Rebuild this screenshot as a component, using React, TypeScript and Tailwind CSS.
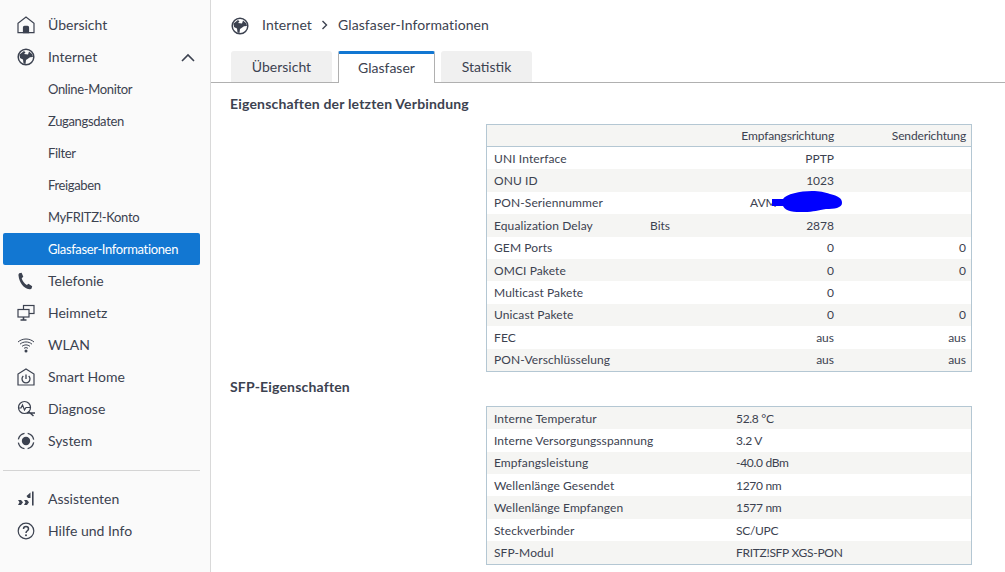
import type { ReactNode } from 'react'

const ink = '#3c4250'

function HomeIcon() {
  return (
    <svg width="18" height="18" viewBox="0 0 18 18" fill="none" stroke={ink} strokeWidth="1.2">
      <path d="M1 16.6V7.2L9 1l8 6.2v9.4z" />
      <path d="M6.5 16.6v-5.2c0-.6.4-1 1-1h3c.6 0 1 .4 1 1v5.2z" fill={ink} />
    </svg>
  )
}

function GlobeIcon() {
  return (
    <svg width="18" height="18" viewBox="0 0 18 18" fill="none">
      <circle cx="9" cy="9" r="7.8" stroke={ink} strokeWidth="1.5" />
      <path d="M2.500 6.500 7 3l1.500 1.500L7 6l4 .5 1-3 3 2.500 1 3-3 .3-2.500 1.700-1.500 1-.5 4-2-.5-.5-4-3-1.500z" fill={ink} />
    </svg>
  )
}

function PhoneIcon() {
  return (
    <svg width="18" height="18" viewBox="0 0 18 18" fill={ink}>
      <path d="M2.200 1.200 4.600.8l1.700 4-1.600 1.400c.7 2.600 2.600 5.200 5.100 6.700l1.700-1.200 3.700 2.500-.6 2.200c-.3.500-1.400 1-2.200.8C6.600 16.500 2.300 10.600 1.500 3.400c-.1-.9.200-1.800.7-2.200z" />
    </svg>
  )
}

function NetworkIcon() {
  return (
    <svg width="18" height="18" viewBox="0 0 18 18" fill="none" stroke={ink} strokeWidth="1.2">
      <rect x="6.500" y="1.500" width="10.500" height="8" />
      <rect x="1" y="5.500" width="11" height="7.500" fill="#fafafa" />
      <path d="M6.500 13v2.500M3.500 16h6" strokeWidth="1.600" />
    </svg>
  )
}

function WifiIcon() {
  return (
    <svg width="18" height="18" viewBox="0 0 18 18" fill="none" stroke={ink} strokeWidth="1">
      <path d="M1 6c4.500-4 11.500-4 16 0M3 8.200c3.400-3 8.600-3 12 0M5 10.400c2.300-2 5.700-2 8 0M7 12.400c1.200-1 2.800-1 4 0" />
      <circle cx="9" cy="15" r="1.500" fill={ink} stroke="none" />
    </svg>
  )
}

function SmartHomeIcon() {
  return (
    <svg width="18" height="18" viewBox="0 0 18 18" fill="none" stroke={ink} strokeWidth="1.2">
      <path d="M1 17V6l8-5 8 5v11z" />
      <path d="M6.300 8a4 4 0 1 0 5.400 0M9 6.500V11" strokeWidth="1.300" />
    </svg>
  )
}

function DiagnoseIcon() {
  return (
    <svg width="18" height="18" viewBox="0 0 18 18" fill="none" stroke={ink} strokeWidth="1.2">
      <circle cx="7.500" cy="7.500" r="6" />
      <path d="M1.500 8h2.500l1.500-3 2 5 1.500-2.500h5" />
      <path d="m11.500 11.500 5 4.500M10 13h8" strokeWidth="1.500" />
    </svg>
  )
}

function SystemIcon() {
  return (
    <svg width="18" height="18" viewBox="0 0 18 18" fill="none">
      <circle cx="9" cy="9" r="7.800" stroke={ink} strokeWidth="1.300" strokeDasharray="9 3.250" strokeDashoffset="-1.500" />
      <circle cx="9" cy="9" r="4.200" fill={ink} />
    </svg>
  )
}

function WizardIcon() {
  return (
    <svg width="18" height="18" viewBox="0 0 18 18" fill={ink}>
      <path d="M1 10h3l2 2.300L4 15H1l1.500-2.700zM7 10h3l2 2.300L10 15H7l1.500-2.700zM9.500 6l4-3.500V8H11zM15 1.500h1.600V15.500H15z" />
    </svg>
  )
}

function HelpIcon() {
  return (
    <svg width="18" height="18" viewBox="0 0 18 18" fill="none" stroke={ink} strokeWidth="1.200">
      <circle cx="9" cy="9" r="7.800" />
      <path d="M6.500 7c0-3.200 5-3.200 5 0 0 1.800-2.500 1.800-2.500 4" strokeWidth="1.500" />
      <circle cx="9" cy="13.300" r="1" fill={ink} stroke="none" />
    </svg>
  )
}

function NavItem({ icon, label, trailing }: { icon: ReactNode; label: string; trailing?: ReactNode }) {
  return (
    <div className="flex h-8 items-center pl-[17px] pr-[15px] text-[14px] text-[#3c4250]">
      <span className="flex w-[31px] shrink-0">{icon}</span>
      <span className="flex-1 pb-[2px]">{label}</span>
      {trailing}
    </div>
  )
}

function SubItem({ label, active }: { label: string; active?: boolean }) {
  return (
    <div
      className={
        active
          ? 'ml-[3px] mr-[10px] flex h-8 items-center rounded-[2px] bg-[#1277d2] pl-[45px] pt-[2px] text-[13px] tracking-[-0.35px] text-white'
          : 'flex h-8 items-center pl-[48px] pt-[2px] text-[13px] tracking-[-0.35px] text-[#3c4250]'
      }
    >
      {label}
    </div>
  )
}

function Sidebar() {
  return (
    <aside className="flex w-[211px] shrink-0 flex-col border-r border-[#d9d9d9] bg-[#fafafa] pt-[9px]">
      <NavItem icon={<HomeIcon />} label="Übersicht" />
      <NavItem
        icon={<GlobeIcon />}
        label="Internet"
        trailing={
          <svg width="14" height="9" viewBox="0 0 14 9" fill="none" stroke={ink} strokeWidth="1.600">
            <path d="m1 8 6-6 6 6" />
          </svg>
        }
      />
      <SubItem label="Online-Monitor" />
      <SubItem label="Zugangsdaten" />
      <SubItem label="Filter" />
      <SubItem label="Freigaben" />
      <SubItem label="MyFRITZ!-Konto" />
      <SubItem label="Glasfaser-Informationen" active />
      <NavItem icon={<PhoneIcon />} label="Telefonie" />
      <NavItem icon={<NetworkIcon />} label="Heimnetz" />
      <NavItem icon={<WifiIcon />} label="WLAN" />
      <NavItem icon={<SmartHomeIcon />} label="Smart Home" />
      <NavItem icon={<DiagnoseIcon />} label="Diagnose" />
      <NavItem icon={<SystemIcon />} label="System" />
      <div className="ml-[3px] mr-[10px] mb-[12px] mt-[13px] border-t border-[#d4d4d4]" />
      <NavItem icon={<WizardIcon />} label="Assistenten" />
      <NavItem icon={<HelpIcon />} label="Hilfe und Info" />
    </aside>
  )
}

function Tab({ label, active, width }: { label: string; active?: boolean; width: string }) {
  return (
    <div
      className={`${width} flex items-center justify-center text-[14px] text-[#3c4250] ${
        active
          ? 'relative z-10 -mb-px h-8 rounded-t-[2px] border-x border-t-[3px] border-x-[#b0b0b0] border-t-[#1277d2] bg-white pb-[2px]'
          : 'h-[31px] rounded-t-[3px] bg-[#f0f0f0]'
      }`}
    >
      {label}
    </div>
  )
}

const connectionRows = [
  ['UNI Interface', '', 'PPTP', ''],
  ['ONU ID', '', '1023', ''],
  ['PON-Seriennummer', '', 'AVM', ''],
  ['Equalization Delay', 'Bits', '2878', ''],
  ['GEM Ports', '', '0', '0'],
  ['OMCI Pakete', '', '0', '0'],
  ['Multicast Pakete', '', '0', ''],
  ['Unicast Pakete', '', '0', '0'],
  ['FEC', '', 'aus', 'aus'],
  ['PON-Verschlüsselung', '', 'aus', 'aus'],
]

const sfpRows = [
  ['Interne Temperatur', '52.8 °C'],
  ['Interne Versorgungsspannung', '3.2 V'],
  ['Empfangsleistung', '-40.0 dBm'],
  ['Wellenlänge Gesendet', '1270 nm'],
  ['Wellenlänge Empfangen', '1577 nm'],
  ['Steckverbinder', 'SC/UPC'],
  ['SFP-Modul', 'FRITZ!SFP XGS-PON'],
]

function ConnectionTable() {
  return (
    <div className="relative ml-[275px] w-[486px] border border-[#b4c7d3] text-[12px] text-[#3c4250]">
      <div className="flex h-[22px] items-center border-b border-[#b4c7d3] bg-[#f5f5f3] pr-[5px] tracking-[-0.15px]">
        <span className="w-[347px] text-right">Empfangsrichtung</span>
        <span className="flex-1 text-right">Senderichtung</span>
      </div>
      {connectionRows.map((row, i) => (
        <div key={row[0]} className={`flex h-[22.4px] items-center pl-[7px] pr-[5px] pt-px ${i % 2 ? 'bg-[#f5f5f3]' : 'bg-white'}`}>
          <span className="w-[156px] tracking-[0.1px]">{row[0]}</span>
          <span className="w-[100px]">{row[1]}</span>
          {/* the serial number starts further left and runs under the blob */}
          <span className={`w-[84px] text-right ${row[2] === 'AVM' ? 'pr-[62px]' : ''}`}>{row[2]}</span>
          <span className="flex-1 text-right">{row[3]}</span>
        </div>
      ))}
      {/* redacted serial number */}
      <svg className="absolute left-[285px] top-[66px]" width="71" height="22" viewBox="0 0 71 22" fill="#0000ff">
        <path d="M0 8h11C14 3 28 0 40 0c8 0 12 1 18 3 8 2 12 4 12 9 0 5-8 6-16 6-8 1-12 3-22 3-10 0-18 0-21-6H0z" />
      </svg>
    </div>
  )
}

function SfpTable() {
  return (
    <div className="ml-[275px] w-[486px] border border-[#b4c7d3] text-[12px] text-[#3c4250]">
      {sfpRows.map((row, i) => (
        <div key={row[0]} className={`flex h-[22.4px] items-center pl-[7px] pt-px ${i % 2 ? 'bg-white' : 'bg-[#f5f5f3]'}`}>
          <span className="w-[242px] tracking-[0.1px]">{row[0]}</span>
          <span className="tracking-[-0.3px]">{row[1]}</span>
        </div>
      ))}
    </div>
  )
}

export default function App() {
  return (
    <div className="flex h-[572px] w-[1005px] overflow-hidden bg-white font-['Lato','Noto_Sans',sans-serif]">
      <Sidebar />
      <main className="flex-1">
        <div className="flex h-[51px] items-center gap-[13px] pl-[20px] text-[14px] tracking-[0.1px] text-[#3c4250]">
          <GlobeIcon />
          <span className="flex items-center gap-[9px] pb-[2px]">
            Internet
            <svg width="8" height="10" viewBox="0 0 8 10" fill="none" stroke={ink} strokeWidth="1.400">
              <path d="m1.500 1 4 4-4 4" />
            </svg>
            Glasfaser-Informationen
          </span>
        </div>
        <div className="flex items-end gap-[6px] border-b border-[#b0b0b0] pl-5">
          <Tab label="Übersicht" width="w-[101px]" />
          <Tab label="Glasfaser" width="w-[97px]" active />
          <Tab label="Statistik" width="w-[91px]" />
        </div>
        <h2 className="mb-[11px] ml-[19px] mt-[12px] text-[14px] font-bold leading-[18px] tracking-[0.18px] text-[#3c4250]">
          Eigenschaften der letzten Verbindung
        </h2>
        <ConnectionTable />
        <h2 className="mb-[10px] ml-[19px] mt-[6px] text-[14px] font-bold leading-[18px] tracking-[0.18px] text-[#3c4250]">
          SFP-Eigenschaften
        </h2>
        <SfpTable />
      </main>
    </div>
  )
}
